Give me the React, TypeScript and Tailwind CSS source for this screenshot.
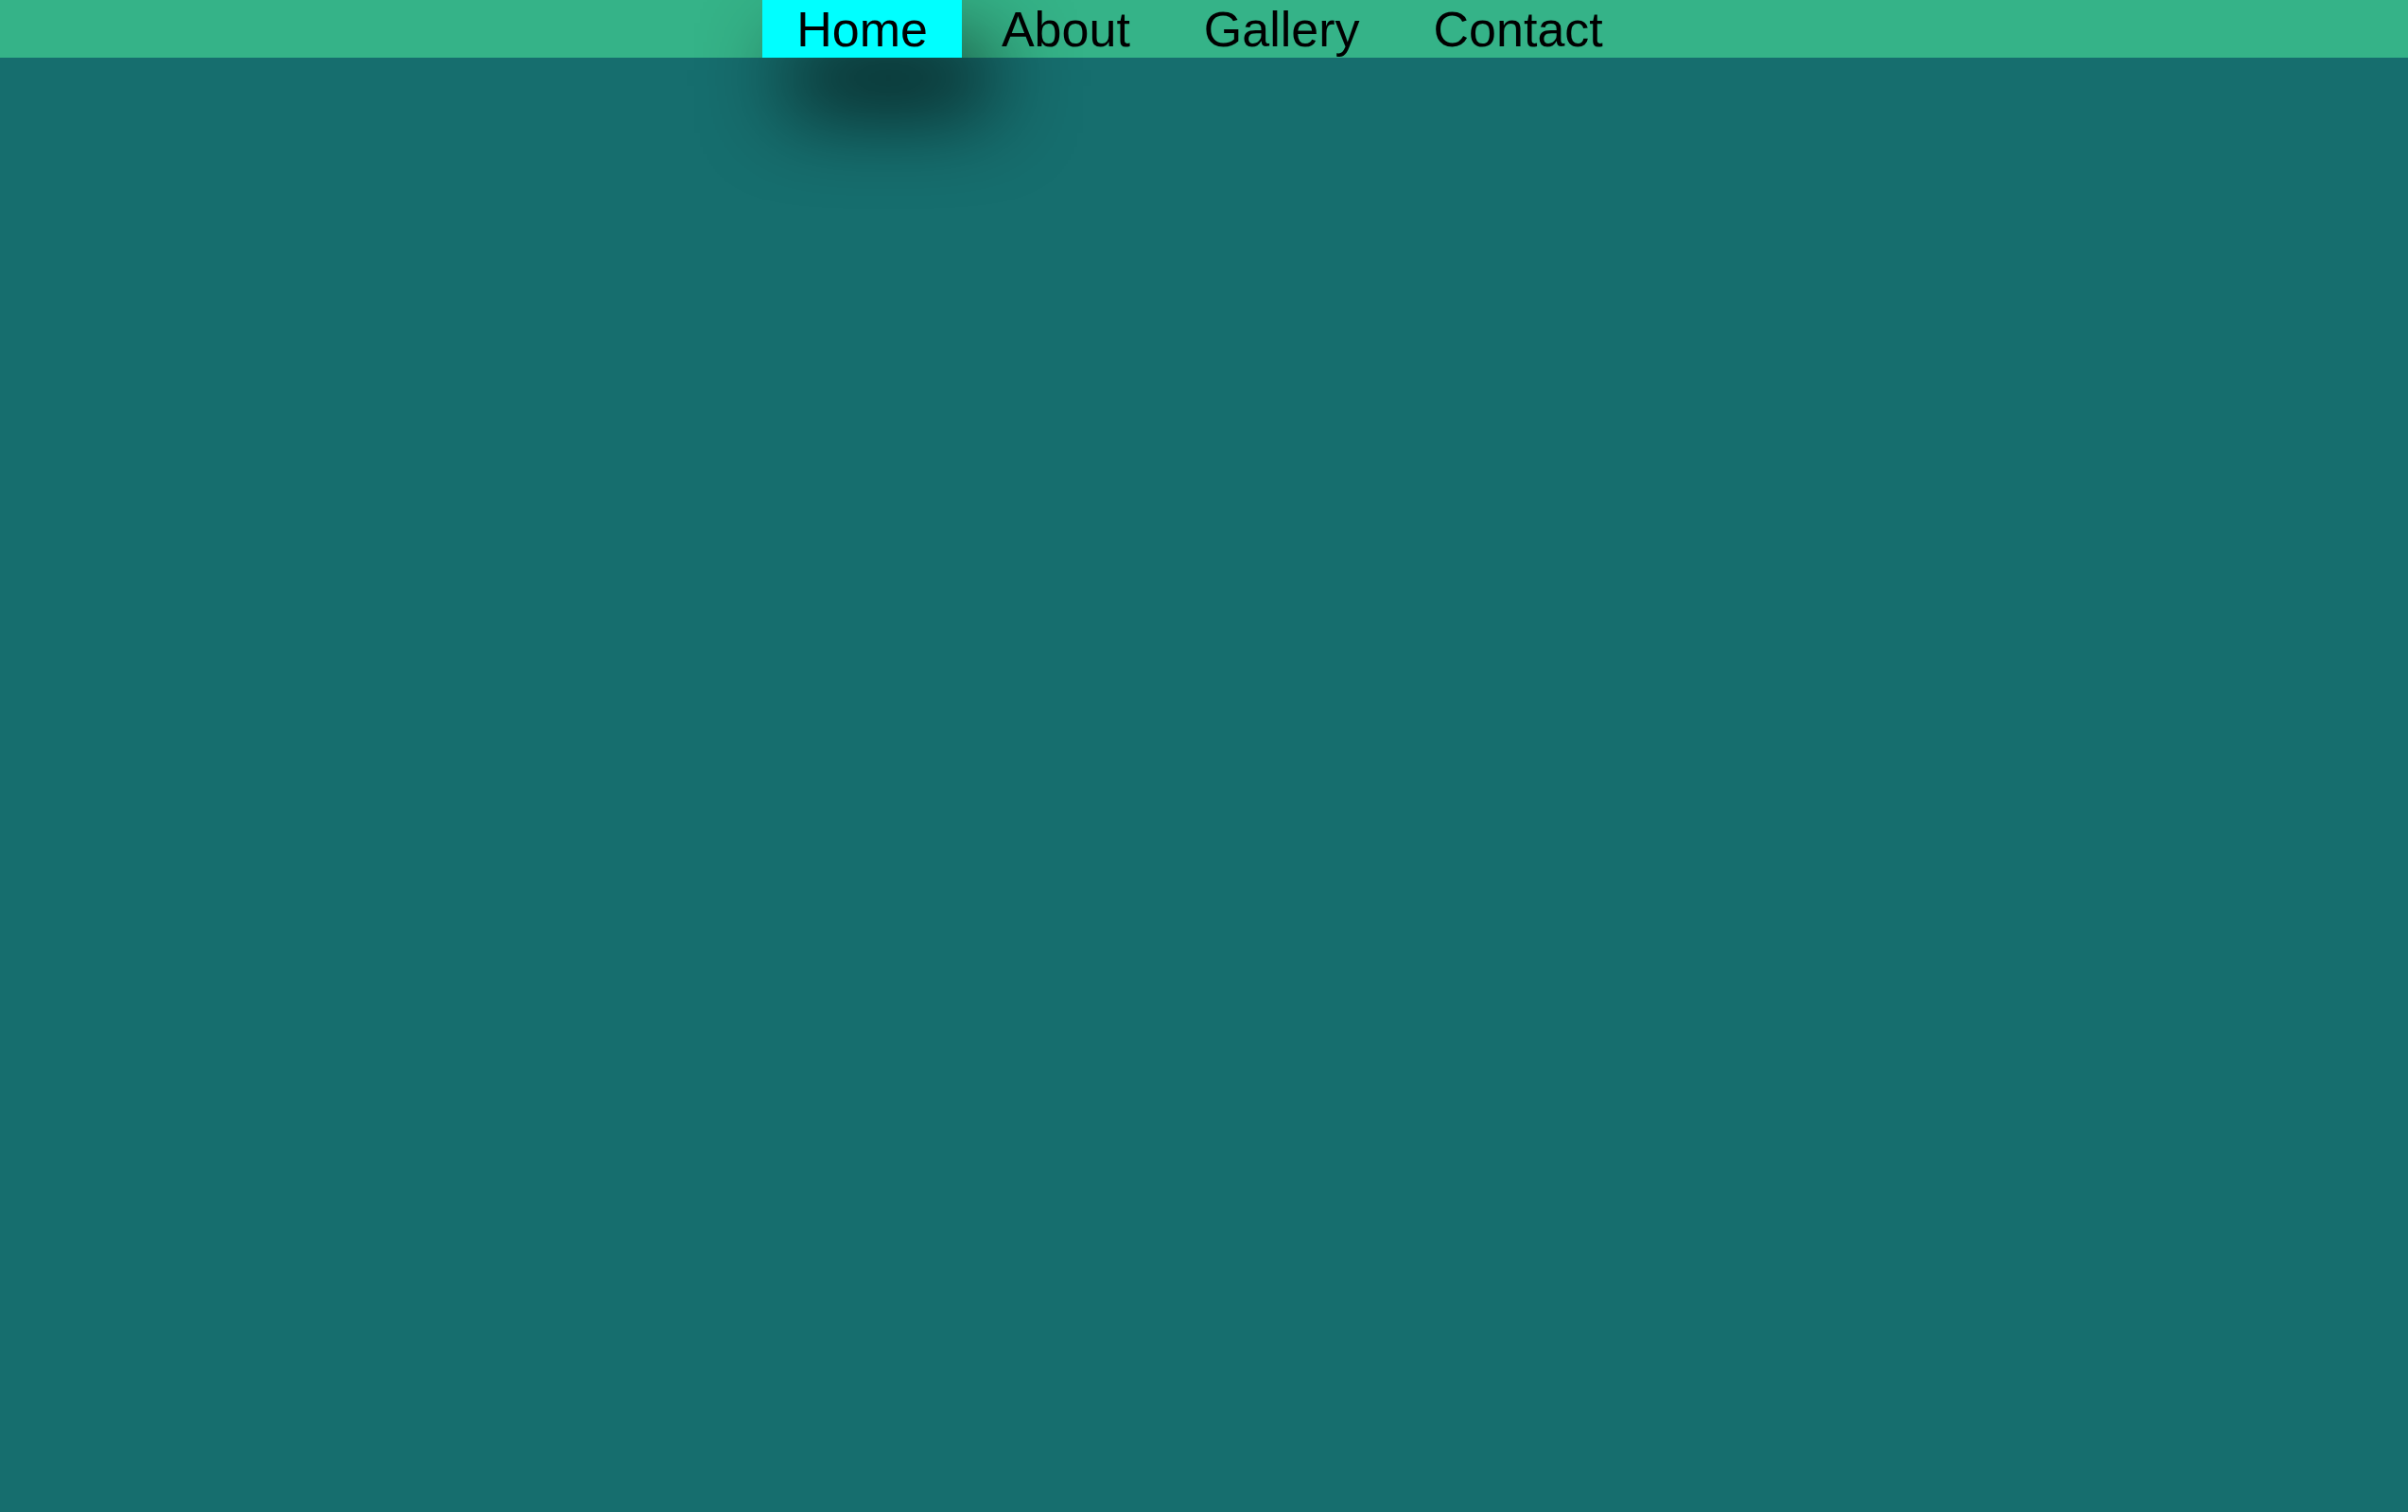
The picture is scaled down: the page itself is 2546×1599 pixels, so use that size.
const links = ['Home', 'About', 'Gallery', 'Contact']

export default function App() {
  return (
    <div className="min-h-screen bg-[#166e6e] font-['Liberation_Sans',Arial,sans-serif]">
      <nav className="h-[61px] bg-[#35b388] flex justify-center gap-[6px] pr-[9px]">
        {links.map((l, i) => (
          <a
            key={l}
            href="#"
            className={
              i === 0
                ? 'h-full flex items-center px-[36px] text-[52px] leading-none text-black bg-[#00ffff] shadow-[28px_52px_90px_rgba(0,0,0,0.85)]'
                : 'h-full flex items-center px-[36px] text-[52px] leading-none text-black'
            }
          >
            {l}
          </a>
        ))}
      </nav>
    </div>
  )
}
